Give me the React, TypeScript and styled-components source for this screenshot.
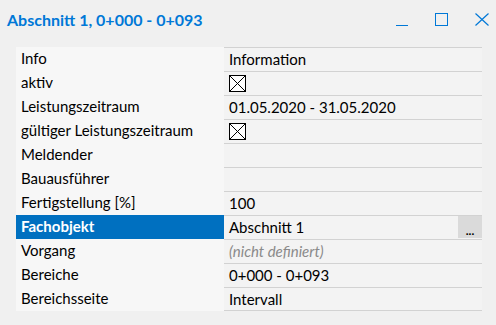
import React from "react";
import styled, { createGlobalStyle } from "styled-components";

const Global = createGlobalStyle`
  html, body { margin: 0; padding: 0; background: #f0f0f0; }
  body { font-family: "Lato", "Noto Sans", sans-serif; }
`;

const Window = styled.div`
  width: 496px;
  height: 325px;
  background: #f0f0f0;
  display: flex;
  flex-direction: column;
  overflow: hidden;
`;

const TitleBar = styled.div`
  height: 47px;
  display: flex;
  align-items: flex-start;
  box-sizing: border-box;
  padding: 10px 7px 0 7px;
`;

const Title = styled.div`
  flex: 1;
  color: #0078d7;
  font-weight: 700;
  font-size: 16px;
  line-height: 20px;
`;

const Controls = styled.div`
  display: flex;
  align-items: flex-start;
  gap: 27px;
  margin-top: 3px;
`;

const CtrlBtn = styled.div`
  height: 13px;
  display: flex;
  svg { display: block; }
`;

const Grid = styled.div`
  margin-left: 16px;
  width: 466px;
  display: grid;
  grid-template-columns: 208px 258px;
  grid-auto-rows: 24px;
`;

const Label = styled.div<{ $selected?: boolean }>`
  background: ${(p) => (p.$selected ? "#0070c0" : "#f7f7f7")};
  color: ${(p) => (p.$selected ? "#ffffff" : "#000000")};
  font-weight: ${(p) => (p.$selected ? 700 : 400)};
  font-size: 15px;
  padding: 0 0 2px 5px;
  box-sizing: border-box;
  display: flex;
  align-items: center;
  white-space: nowrap;
`;

const Value = styled.div<{ $last?: boolean; $muted?: boolean }>`
  background: #f3f3f3;
  border-top: 1px solid #d2d2d2;
  ${(p) => (p.$last ? "border-bottom: 1px solid #d2d2d2;" : "")}
  color: ${(p) => (p.$muted ? "#8a8a8a" : "#000000")};
  font-style: ${(p) => (p.$muted ? "italic" : "normal")};
  font-size: 15px;
  padding: 0 0 1px 5px;
  display: flex;
  align-items: center;
  white-space: nowrap;
`;

const ValueText = styled.span`
  flex: 1;
  display: flex;
  align-items: center;
`;

const DotsButton = styled.div`
  width: 24px;
  height: 22px;
  background: #dadada;
  align-self: flex-start;
  font-size: 12px;
  display: flex;
  align-items: flex-end;
  justify-content: center;
  line-height: 14px;
  font-weight: 700;
  font-style: normal;
`;

const CheckBox = () => (
  <svg width="17" height="17" viewBox="0 0 17 17">
    <rect x="0.5" y="0.5" width="16" height="16" fill="#fff" stroke="#000" />
    <path d="M1 1 L16 16 M16 1 L1 16" stroke="#000" strokeWidth="1" />
  </svg>
);

type Row = { label: string; value?: React.ReactNode; muted?: boolean; selected?: boolean; dots?: boolean };

const rows: Row[] = [
  { label: "Info", value: "Information" },
  { label: "aktiv", value: <CheckBox /> },
  { label: "Leistungszeitraum", value: "01.05.2020 - 31.05.2020" },
  { label: "gültiger Leistungszeitraum", value: <CheckBox /> },
  { label: "Meldender" },
  { label: "Bauausführer" },
  { label: "Fertigstellung [%]", value: "100" },
  { label: "Fachobjekt", value: "Abschnitt 1", selected: true, dots: true },
  { label: "Vorgang", value: "(nicht definiert)", muted: true },
  { label: "Bereiche", value: "0+000 - 0+093" },
  { label: "Bereichsseite", value: "Intervall" },
];

export default function App() {
  return (
    <Window>
      <Global />
      <TitleBar>
        <Title>Abschnitt 1, 0+000 - 0+093</Title>
        <Controls>
          <CtrlBtn>
            <svg width="12" height="13" viewBox="0 0 12 13">
              <path d="M0 12.5 H12" stroke="#0078d7" strokeWidth="1" />
            </svg>
          </CtrlBtn>
          <CtrlBtn>
            <svg width="13" height="13" viewBox="0 0 13 13">
              <rect x="0.5" y="0.5" width="12" height="12" fill="none" stroke="#0078d7" />
            </svg>
          </CtrlBtn>
          <CtrlBtn>
            <svg width="14" height="13" viewBox="0 0 14 13">
              <path d="M0.5 0.5 L13.5 12.5 M13.5 0.5 L0.5 12.5" stroke="#0078d7" strokeWidth="1.2" />
            </svg>
          </CtrlBtn>
        </Controls>
      </TitleBar>
      <Grid>
        {rows.map((r, i) => (
          <React.Fragment key={r.label}>
            <Label $selected={r.selected}>{r.label}</Label>
            <Value $last={i === rows.length - 1} $muted={r.muted}>
              <ValueText>{r.value}</ValueText>
              {r.dots && <DotsButton>...</DotsButton>}
            </Value>
          </React.Fragment>
        ))}
      </Grid>
    </Window>
  );
}
